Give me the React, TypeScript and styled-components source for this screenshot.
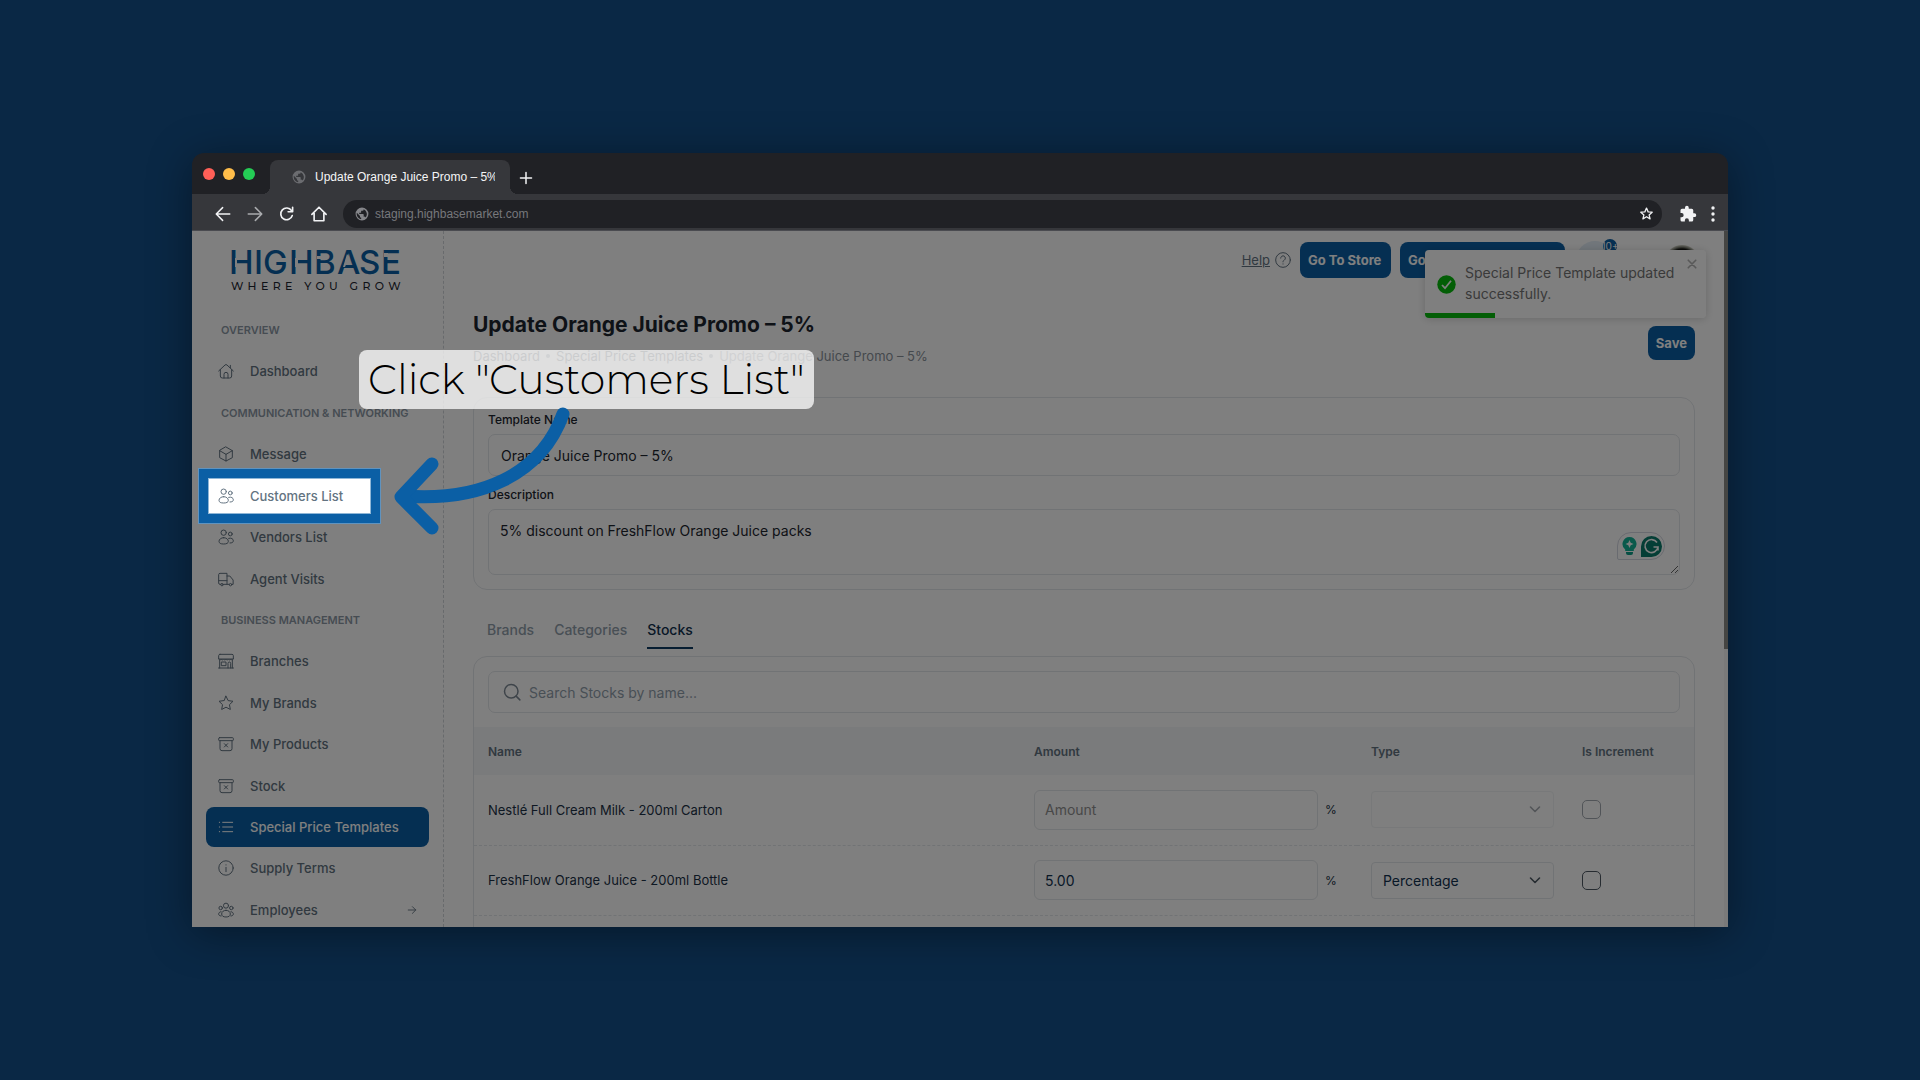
import React from 'react';
import styled, { createGlobalStyle, css } from 'styled-components';

const blue = '#0b5fa5';
const line = '#e3e6ea';
const appFont = 'Inter, "Open Sans", sans-serif';

const GlobalStyle = createGlobalStyle`
  *, *::before, *::after { box-sizing: border-box; }
  body { margin: 0; background: #0a2845; font-family: ${appFont}; }
  button, input, textarea, select { font-family: inherit; margin: 0; }
`;

/* ---------- stage and browser chrome ---------- */

const Stage = styled.div`
  min-height: 100vh;
  display: flex;
  align-items: center;
  justify-content: center;
`;

const BrowserWindow = styled.div`
  width: 80%;
  border-radius: 12px 12px 0 0;
  overflow: hidden;
  box-shadow: 0 6px 44px rgba(0, 0, 0, 0.4);
`;

const TitleBar = styled.div`
  height: 41px;
  background: #202125;
  display: flex;
  align-items: flex-end;
`;

const Lights = styled.div`
  align-self: center;
  display: flex;
  gap: 8px;
  padding: 0 15px 0 11px;
`;

const Light = styled.span<{ $color: string }>`
  width: 12px;
  height: 12px;
  border-radius: 50%;
  background: ${(p) => p.$color};
`;

const BrowserTab = styled.div`
  position: relative;
  width: 240px;
  height: 34px;
  padding: 0 15px 0 22px;
  border-radius: 8px 8px 0 0;
  background: #36373b;
  display: flex;
  align-items: center;
  gap: 9px;
  font: 12px "Liberation Sans", Arial, sans-serif;
  color: #f4f5f6;

  &::before,
  &::after {
    content: '';
    position: absolute;
    bottom: 0;
    width: 8px;
    height: 8px;
  }
  &::before {
    left: -8px;
    background: radial-gradient(circle at 0 0, transparent 8px, #36373b 8px);
  }
  &::after {
    right: -8px;
    background: radial-gradient(circle at 100% 0, transparent 8px, #36373b 8px);
  }
`;

const TabTitle = styled.span`
  flex: 1;
  line-height: 18px;
  white-space: nowrap;
  overflow: hidden;
`;

const ChromeButton = styled.button`
  border: 0;
  padding: 0;
  background: none;
  display: flex;
  align-items: center;
  color: #f1f2f4;
`;

const NewTab = styled(ChromeButton)`
  height: 32px;
  margin-left: 9px;
`;

const Toolbar = styled.div`
  height: 37px;
  padding: 3px 8px 0 22px;
  background: #36373b;
  border-bottom: 1px solid #4a4b50;
  display: flex;
  align-items: center;
`;

const NavButtons = styled.div`
  display: flex;
  gap: 14px;
  padding-right: 15px;
`;

const AddressBar = styled.div`
  flex: 1;
  height: 28px;
  padding: 0 9px 0 12px;
  border-radius: 14px;
  background: #202125;
  display: flex;
  align-items: center;
  gap: 6px;
`;

const AddressInput = styled.input`
  flex: 1;
  border: 0;
  padding: 0;
  background: none;
  font: 12px "Liberation Sans", Arial, sans-serif;
  color: #77787c;
  outline: none;
`;

const ToolbarEnd = styled.div`
  display: flex;
  gap: 9px;
  padding-left: 17px;
`;

/* ---------- page viewport ---------- */

const Viewport = styled.div`
  position: relative;
  height: 696px;
  overflow: hidden;
  background: #fff;
  display: flex;
  align-items: flex-start;
`;

const Sidebar = styled.aside`
  width: 252px;
  flex: none;
  height: 100%;
  border-right: 1px dashed #d0d4d9;
`;

const Brand = styled.div`
  height: 79px;
  padding: 18px 0 0 32px;
`;

const Menu = styled.nav`
  height: 620px;
  padding: 0 14px;
  display: flex;
  flex-direction: column;
  justify-content: space-between;
`;

const SectionTitle = styled.div`
  height: 40px;
  line-height: 40px;
  padding-left: 15px;
  font-size: 11px;
  font-weight: 600;
  color: #8c98a5;
  white-space: nowrap;
`;

const MenuRow = styled.div`
  position: relative;
`;

const MenuLink = styled.a<{ $active?: boolean }>`
  height: 40px;
  padding: 0 12px;
  border-radius: 8px;
  display: flex;
  align-items: center;
  gap: 16px;
  font-size: 13px;
  font-weight: 500;
  white-space: nowrap;
  text-decoration: none;
  color: #637381;
  ${(p) => p.$active && css`
    background: ${blue};
    color: #fff;
  `}
`;

const MenuText = styled.span`
  flex: 1;
`;

const Spotlight = styled.div`
  position: absolute;
  z-index: 5;
  left: -8px;
  top: -8px;
  width: 183px;
  height: 56px;
  border: 10px solid ${blue};
  outline: 1px solid #5f93bf;
  outline-offset: -1px;
  box-shadow: inset 0 0 0 1px #8fb6d6, 0 0 0 3000px rgba(0, 0, 0, 0.5);
  pointer-events: none;
`;

const Main = styled.main`
  flex: 1;
  min-width: 0;
  padding: 0 29px;
`;

const ScrollTrack = styled.div`
  width: 4px;
  height: 100%;
  flex: none;
  background: #f4f4f4;
`;

const ScrollThumb = styled.div`
  height: 60%;
  background: #8a8a86;
`;

/* ---------- header ---------- */

const TopBar = styled.header`
  height: 47px;
  padding-top: 11px;
  display: flex;
  justify-content: flex-end;
  align-items: center;
  gap: 9px;
`;

const HelpLink = styled.a`
  display: flex;
  align-items: center;
  gap: 5px;
  font-size: 13px;
  color: #637381;
`;

const Button = styled.button<{ $width?: number }>`
  height: 36px;
  padding: 0 8px;
  border: 0;
  border-radius: 8px;
  background: ${blue};
  color: #fff;
  font-size: 13px;
  font-weight: 700;
  text-align: left;
  white-space: nowrap;
  ${(p) => p.$width && css`width: ${p.$width}px;`}
`;

const SaveButton = styled(Button)`
  height: 34px;
  margin-top: 17px;
`;

const Bell = styled.button`
  position: relative;
  width: 38px;
  height: 38px;
  margin-left: 2px;
  padding: 0;
  border: 0;
  border-radius: 50%;
  background: #e3edf6;
`;

const BellCount = styled.span`
  position: absolute;
  top: -2px;
  right: -3px;
  width: 14px;
  height: 14px;
  border-radius: 7px;
  overflow: hidden;
  background: ${blue};
  color: #fff;
  display: flex;
  justify-content: center;
  font-size: 10px;
  line-height: 14px;
`;

const Avatar = styled.div`
  width: 36px;
  height: 36px;
  margin: 6px -5px 0 41px;
  border-radius: 50%;
  background: radial-gradient(circle, #12130f 0 14px, #84867a 16px, #d5d6cb 18px);
`;

const PageHead = styled.div`
  padding-top: 31px;
  display: flex;
  justify-content: space-between;
  align-items: flex-start;
`;

const Title = styled.h1`
  margin: 0;
  font-size: 21px;
  line-height: 32px;
  font-weight: 700;
  color: #1c252e;
`;

const Crumbs = styled.ol`
  list-style: none;
  margin: 6px 0 0;
  padding: 0;
  display: flex;
  gap: 6px;
  font-size: 13px;
  line-height: 18px;
`;

const Crumb = styled.li`
  display: flex;
  align-items: center;
  gap: 6px;
  color: #8a929b;

  & + &::before {
    content: '';
    width: 4px;
    height: 4px;
    border-radius: 50%;
    background: #919eab;
  }
`;

const CrumbLink = styled.a`
  color: #5f6a75;
  text-decoration: none;
`;

/* ---------- form ---------- */

const Card = styled.section<{ $gap: number }>`
  margin-top: ${(p) => p.$gap}px;
  border: 1px solid ${line};
  border-radius: 14px;
`;

const FormBody = styled.div`
  padding: 13px 14px 14px;
  display: flex;
  flex-direction: column;
  gap: 10px;
`;

const Field = styled.div`
  position: relative;
  display: flex;
  flex-direction: column;
  gap: 5px;
`;

const Label = styled.label`
  font-size: 12px;
  line-height: 18px;
  font-weight: 500;
  color: #1c252e;
`;

const box = css`
  border: 1px solid ${line};
  border-radius: 7px;
  background: #fff;
  font-size: 14px;
  color: #1c252e;
  outline: none;
`;

const TextInput = styled.input`
  ${box}
  height: 42px;
  padding: 0 12px;
`;

const TextArea = styled.textarea`
  ${box}
  display: block;
  height: 66px;
  padding: 11px;
  line-height: 20px;
`;

const Assistant = styled.div`
  position: absolute;
  right: 15px;
  bottom: 15px;
  width: 48px;
  height: 28px;
  padding: 0 2px 0 4px;
  border: 1px solid #d3d6e0;
  border-radius: 14px 14px 14px 2px;
  background: #fff;
  display: flex;
  align-items: center;
  justify-content: space-between;
`;

const Tabs = styled.div`
  margin-top: 30px;
  padding-left: 14px;
  display: flex;
  gap: 20px;
`;

const Tab = styled.button<{ $active?: boolean }>`
  padding: 0 0 7px;
  border: 0;
  border-bottom: 2px solid ${(p) => (p.$active ? '#0c3a63' : 'transparent')};
  background: none;
  font-size: 14px;
  line-height: 20px;
  font-weight: 500;
  color: ${(p) => (p.$active ? '#10304e' : '#919eab')};
`;

const SearchBox = styled.label`
  ${box}
  height: 42px;
  margin: 14px;
  padding: 0 14px;
  display: flex;
  align-items: center;
  gap: 8px;
  color: #7d8994;
`;

const SearchInput = styled.input`
  flex: 1;
  border: 0;
  padding: 0;
  outline: none;
  background: none;
  font-size: 14px;
  &::placeholder { color: #919eab; }
`;

const Table = styled.table`
  width: 100%;
  table-layout: fixed;
  border-collapse: collapse;
`;

const Col = styled.col<{ $width?: number }>`
  ${(p) => p.$width && css`width: ${p.$width}px;`}
`;

const HeadCell = styled.th`
  height: 48px;
  padding: 0 14px;
  background: #f4f6f8;
  text-align: left;
  font-size: 12px;
  font-weight: 600;
  color: #637381;
`;

const Cell = styled.td`
  height: 70px;
  padding: 0 14px;
  border-bottom: 1px dashed ${line};
  font-size: 13px;
  color: #1c3146;
`;

const AmountGroup = styled.div`
  display: flex;
  align-items: center;
  gap: 7px;
  font-size: 12px;
`;

const AmountInput = styled.input`
  ${box}
  width: 284px;
  height: 40px;
  padding: 0 10px;
  border-radius: 6px;
  color: #10304e;
  &::placeholder { color: #919191; }
`;

const SelectWrap = styled.div<{ $off?: boolean }>`
  position: relative;
  opacity: ${(p) => (p.$off ? 0.5 : 1)};
`;

const Select = styled.select`
  ${box}
  display: block;
  width: 100%;
  height: 37px;
  padding: 0 11px;
  border-radius: 4px;
  appearance: none;
  color: #10304e;
  opacity: 1;
`;

const Chevron = styled.svg`
  position: absolute;
  right: 13px;
  top: 12px;
  pointer-events: none;
`;

const Check = styled.input<{ $off?: boolean }>`
  appearance: none;
  display: block;
  width: 19px;
  height: 19px;
  border: 1px solid ${(p) => (p.$off ? '#a3a9b0' : '#4e5963')};
  border-radius: 5px;
`;

/* ---------- layers over the page ---------- */

const Toast = styled.div`
  position: absolute;
  z-index: 2;
  top: 19px;
  right: 22px;
  width: 281px;
  height: 68px;
  padding: 12px;
  border-radius: 4px;
  overflow: hidden;
  background: #fff;
  display: flex;
  gap: 9px;
  font-size: 14px;
  line-height: 21px;
  color: #757575;
`;

const ToastShadow = styled.div`
  position: absolute;
  z-index: 1;
  top: 19px;
  right: 22px;
  width: 281px;
  height: 68px;
  border-radius: 4px;
  box-shadow: 0 1px 9px rgba(0, 0, 0, 0.18);
`;

const ToastIcon = styled.svg`
  flex: none;
  align-self: center;
`;

const ToastText = styled.span`
  width: 216px;
  flex: none;
`;

const ToastClose = styled.button`
  position: absolute;
  top: 9px;
  right: 9px;
  width: 10px;
  height: 10px;
  border: 0;
  padding: 0;
  background: none;
  display: flex;
  color: #b3b3b3;
`;

const ToastProgress = styled.div`
  position: absolute;
  left: 0;
  bottom: 0;
  width: 25%;
  height: 5px;
  background: #07bc0c;
`;

const Callout = styled.div`
  position: absolute;
  z-index: 6;
  left: 167px;
  top: 119px;
  height: 59px;
  padding: 0 9px;
  border-radius: 8px;
  background: rgba(255, 255, 255, 0.75);
  font-family: Montserrat, Inter, sans-serif;
  font-size: 41px;
  line-height: 59px;
  font-weight: 300;
  color: #000;
  white-space: nowrap;
`;

const Arrow = styled.svg`
  position: absolute;
  z-index: 7;
  left: 200px;
  top: 169px;
`;

/* ---------- drawings ---------- */

const Globe = ({ size, color }: { size: number; color: string }) => (
  <svg width={size} height={size} viewBox="0 0 24 24" fill={color} aria-hidden="true">
    <path d="M12 1a11 11 0 1 0 0 22 11 11 0 0 0 0-22zm-1.500 19.800A9 9 0 0 1 3.200 10l5.300 5.300v1.100a2.200 2.200 0 0 0 2.200 2.200zm7.600-2.800a2.200 2.200 0 0 0-2.100-1.500h-1.100v-3.300a1.100 1.100 0 0 0-1.100-1.100H7.200V9.900h2.200a1.100 1.100 0 0 0 1.100-1.100V6.600h2.200a2.200 2.200 0 0 0 2.200-2.200v-.5A9 9 0 0 1 18.100 18z" />
  </svg>
);

const Line = ({ children, size = 16, width = 1.5 }: { children: React.ReactNode; size?: number; width?: number }) => (
  <svg width={size} height={size} viewBox="0 0 24 24" fill="none" stroke="currentColor" strokeWidth={width} strokeLinecap="round" strokeLinejoin="round" aria-hidden="true">
    {children}
  </svg>
);

const UsersPair = (
  <>
    <circle cx="8.500" cy="5.500" r="4" />
    <circle cx="18.500" cy="7.500" r="2.800" />
    <path d="M8.500 13c-4 0-7 2.500-7 5.500 0 2.800 2.500 4 7 4s7-1.200 7-4c0-3-3-5.500-7-5.500z" />
    <path d="M16 14c4-1.200 7 .8 7 3.700 0 2.400-2 3.300-5 3.300" />
  </>
);

const ArchiveX = (
  <>
    <rect x="1" y="2.500" width="22" height="4.500" rx="1.200" />
    <path d="M3 7v12a3 3 0 0 0 3 3h12a3 3 0 0 0 3-3V7M9.500 11.500l5 5M14.500 11.500l-5 5" />
  </>
);

const icons: Record<string, React.ReactNode> = {
  home: (
    <>
      <path d="M1 12 10.500 3a2.200 2.200 0 0 1 3 0L23 12M3.500 10v9.500a3 3 0 0 0 3 3h11a3 3 0 0 0 3-3V10M18.500 7V3.500" />
      <path d="M9 22.500V17a3 3 0 0 1 6 0v5.500" />
    </>
  ),
  cube: <path d="M12 1.500 21.500 7v10.500L12 22.500 2.500 17.500V7zM2.500 7 12 12.500 21.500 7M12 12.500v10" />,
  users: UsersPair,
  truck: (
    <>
      <path d="M4 20H3a2 2 0 0 1-2-2V5.500a2 2 0 0 1 2-2h10.500V20M1 14.500h12.500M13.500 7.500h4.200l5 6V20h-1.500M8.500 20h8" />
      <circle cx="6" cy="20.500" r="1.800" />
      <circle cx="18.800" cy="20.500" r="1.800" />
    </>
  ),
  store: (
    <>
      <path d="M3 2h18a2 2 0 0 1 2 2v5H1V4a2 2 0 0 1 2-2zM1 9c.8 1.800 3 1.800 3.700 0 .7 1.800 2.900 1.800 3.600 0 .8 1.800 3 1.800 3.700 0 .7 1.800 2.900 1.800 3.600 0 .8 1.800 3 1.800 3.700 0 .7 1.800 2.900 1.800 3.700 0M2.500 11v11.500M21.500 11v11.500M.8 22.500h22.400" />
      <path d="M5.500 13.500H12v5.500H5.500zM15 22.500v-7a2 2 0 0 1 4 0v7" />
    </>
  ),
  star: <path d="m12 1.800 3.200 6.600 7.300 1-5.300 5.100 1.300 7.200L12 18.300l-6.500 3.400 1.300-7.200L1.500 9.400l7.300-1z" />,
  archive: ArchiveX,
  list: <path d="M7 5h15M7 12h15M7 19h15M2 5h.5M2 12h.5M2 19h.5" />,
  info: (
    <>
      <circle cx="12" cy="12" r="10.800" />
      <path d="M12 11v6.500M12 7.200v.3" />
    </>
  ),
  team: (
    <>
      <circle cx="12" cy="5.500" r="3.800" />
      <circle cx="4" cy="9" r="2.600" />
      <circle cx="20" cy="9" r="2.600" />
      <path d="M12 12.500c-3.800 0-6.500 2.200-6.500 5.500 0 3 2.500 4.500 6.500 4.500s6.500-1.500 6.500-4.500c0-3.300-2.700-5.500-6.500-5.500zM4.500 14.500C2 15 1 16.500 1 18c0 1.800 1.300 2.800 3.500 3M19.500 14.500C22 15 23 16.500 23 18c0 1.800-1.300 2.800-3.500 3" />
    </>
  ),
};

const Logo = () => (
  <svg width="190" height="48" viewBox="-7 0 190 48" role="img" aria-label="Highbase, where you grow">
    <text x="-2 23 32 58 83 106 128 150" y="25" fontFamily="Inter, sans-serif" fontSize="33" fontWeight="500" fill={blue}>
      HIGHBASE
    </text>
    <g fill="#fff">
      <rect x="4" y="9" width="2" height="9" />
      <rect x="64" y="9" width="3" height="9" />
      <rect x="86" y="7" width="4" height="3" />
      <rect x="153" y="4" width="4" height="4" />
      <path d="M116 5l-4 13 2 0 4-10z" />
    </g>
    <text x="0" y="41" fontFamily="Montserrat, sans-serif" fontSize="11" fontWeight="500" letterSpacing="0.4em" fill="#1c252e">
      WHERE YOU GROW
    </text>
  </svg>
);

/* ---------- data ---------- */

type Entry = { title: string } | { icon: string; label: string; active?: boolean; spot?: boolean; more?: boolean };

const menu: Entry[] = [
  { title: 'OVERVIEW' },
  { icon: 'home', label: 'Dashboard' },
  { title: 'COMMUNICATION & NETWORKING' },
  { icon: 'cube', label: 'Message' },
  { icon: 'users', label: 'Customers List', spot: true },
  { icon: 'users', label: 'Vendors List' },
  { icon: 'truck', label: 'Agent Visits' },
  { title: 'BUSINESS MANAGEMENT' },
  { icon: 'store', label: 'Branches' },
  { icon: 'star', label: 'My Brands' },
  { icon: 'archive', label: 'My Products' },
  { icon: 'archive', label: 'Stock' },
  { icon: 'list', label: 'Special Price Templates', active: true },
  { icon: 'info', label: 'Supply Terms' },
  { icon: 'team', label: 'Employees', more: true },
];

const stocks = [
  { name: 'Nestlé Full Cream Milk - 200ml Carton', amount: '', type: '' },
  { name: 'FreshFlow Orange Juice - 200ml Bottle', amount: '5.00', type: 'Percentage' },
];

/* ---------- page ---------- */

const Chrome = () => (
  <>
    <TitleBar>
      <Lights>
        <Light $color="#ff5f57" />
        <Light $color="#ffbd4a" />
        <Light $color="#24cc55" />
      </Lights>
      <BrowserTab>
        <Globe size={14} color="#6b6c70" />
        <TabTitle>Update Orange Juice Promo – 5%</TabTitle>
      </BrowserTab>
      <NewTab aria-label="New tab">
        <Line size={14} width={2.6}><path d="M12 2.500v19M2.500 12h19" /></Line>
      </NewTab>
    </TitleBar>
    <Toolbar>
      <NavButtons>
        <ChromeButton aria-label="Back">
          <Line size={18} width={2}><path d="M21 12H4M11.500 3.500 3 12l8.500 8.500" /></Line>
        </ChromeButton>
        <ChromeButton aria-label="Forward">
          <svg width="18" height="18" viewBox="0 0 24 24" fill="none" stroke="#a9aaad" strokeWidth="2" strokeLinecap="round" strokeLinejoin="round" aria-hidden="true">
            <path d="M3 12h17M12.500 3.500 21 12l-8.500 8.500" />
          </svg>
        </ChromeButton>
        <ChromeButton aria-label="Reload">
          <Line size={18} width={2.2}><path d="M18 7.500A7.800 7.800 0 1 0 19 14M19.500 3v6H13.500" /></Line>
        </ChromeButton>
        <ChromeButton aria-label="Home">
          <Line size={18} width={2.2}><path d="M2.500 12.500 12 3l9.500 9.500M5.500 10.500V21h13V10.500" /></Line>
        </ChromeButton>
      </NavButtons>
      <AddressBar>
        <Globe size={14} color="#85868a" />
        <AddressInput aria-label="Address" defaultValue="staging.highbasemarket.com" />
        <ChromeButton aria-label="Bookmark">
          <Line size={13} width={2.4}><path d="m12 2 3 7 7.500.6-5.700 5 1.800 7.400-6.600-4-6.600 4 1.800-7.400-5.700-5L9 9z" /></Line>
        </ChromeButton>
      </AddressBar>
      <ToolbarEnd>
        <ChromeButton aria-label="Extensions">
          <svg width="18" height="18" viewBox="0 0 24 24" fill="currentColor" aria-hidden="true">
            <path d="M20.500 11H19V7a2 2 0 0 0-2-2h-4V3.500a2.500 2.500 0 0 0-5 0V5H4a2 2 0 0 0-2 2v3.800h1.500a2.700 2.700 0 0 1 0 5.400H2V20a2 2 0 0 0 2 2h3.800v-1.500a2.700 2.700 0 0 1 5.400 0V22H17a2 2 0 0 0 2-2v-4h1.500a2.500 2.500 0 0 0 0-5z" />
          </svg>
        </ChromeButton>
        <ChromeButton aria-label="Browser menu">
          <svg width="14" height="18" viewBox="0 0 14 18" fill="currentColor" aria-hidden="true">
            <circle cx="7" cy="3" r="1.700" />
            <circle cx="7" cy="9" r="1.700" />
            <circle cx="7" cy="15" r="1.700" />
          </svg>
        </ChromeButton>
      </ToolbarEnd>
    </Toolbar>
  </>
);

const SideMenu = () => (
  <Sidebar>
    <Brand><Logo /></Brand>
    <Menu>
      {menu.map((item) =>
        'title' in item ? (
          <SectionTitle key={item.title}>{item.title}</SectionTitle>
        ) : (
          <MenuRow key={item.label}>
            <MenuLink href="#" $active={item.active}>
              <Line>{icons[item.icon]}</Line>
              <MenuText>{item.label}</MenuText>
              {item.more && <Line size={10} width={2.2}><path d="M3 12h18M13 4l8 8-8 8" /></Line>}
            </MenuLink>
            {item.spot && <Spotlight />}
          </MenuRow>
        ),
      )}
    </Menu>
  </Sidebar>
);

const StocksTable = () => (
  <Table>
    <colgroup>
      <Col />
      <Col $width={337} />
      <Col $width={211} />
      <Col $width={126} />
    </colgroup>
    <thead>
      <tr>
        <HeadCell>Name</HeadCell>
        <HeadCell>Amount</HeadCell>
        <HeadCell>Type</HeadCell>
        <HeadCell>Is Increment</HeadCell>
      </tr>
    </thead>
    <tbody>
      {stocks.map((row) => (
        <tr key={row.name}>
          <Cell>{row.name}</Cell>
          <Cell>
            <AmountGroup>
              <AmountInput aria-label={'Amount for ' + row.name} placeholder="Amount" defaultValue={row.amount} />
              %
            </AmountGroup>
          </Cell>
          <Cell>
            <SelectWrap $off={!row.type}>
              <Select aria-label={'Type for ' + row.name} disabled={!row.type} defaultValue={row.type}>
                <option>{row.type}</option>
              </Select>
              <Chevron width="12" height="12" viewBox="0 0 12 12" fill="none" stroke="#4e5963" strokeWidth="1.600" strokeLinecap="round" strokeLinejoin="round">
                <path d="M1.500 4 6 8.500 10.500 4" />
              </Chevron>
            </SelectWrap>
          </Cell>
          <Cell>
            <Check type="checkbox" aria-label={'Is increment for ' + row.name} $off={!row.type} disabled={!row.type} />
          </Cell>
        </tr>
      ))}
      <tr>
        <Cell colSpan={4} />
      </tr>
    </tbody>
  </Table>
);

export default function App() {
  return (
    <Stage>
      <GlobalStyle />
      <BrowserWindow>
        <Chrome />
        <Viewport>
          <SideMenu />
          <Main>
            <TopBar>
              <HelpLink href="#">
                Help
                <Line><circle cx="12" cy="12" r="11" /><path d="M8.500 9.200a3.500 3.500 0 1 1 5.300 3c-1.200.8-1.800 1.300-1.800 2.600M12 17.800v.3" /></Line>
              </HelpLink>
              <Button $width={91}>Go To Store</Button>
              <Button $width={165}>Go</Button>
              <Bell aria-label="Notifications">
                <BellCount>10+</BellCount>
              </Bell>
              <Avatar />
            </TopBar>
            <PageHead>
              <div>
                <Title>Update Orange Juice Promo – 5%</Title>
                <Crumbs>
                  <Crumb><CrumbLink href="#">Dashboard</CrumbLink></Crumb>
                  <Crumb><CrumbLink href="#">Special Price Templates</CrumbLink></Crumb>
                  <Crumb>Update Orange Juice Promo – 5%</Crumb>
                </Crumbs>
              </div>
              <SaveButton>Save</SaveButton>
            </PageHead>
            <Card $gap={32}>
              <FormBody>
                <Field>
                  <Label htmlFor="template-name">Template Name</Label>
                  <TextInput id="template-name" defaultValue="Orange Juice Promo – 5%" />
                </Field>
                <Field>
                  <Label htmlFor="description">Description</Label>
                  <TextArea id="description" defaultValue="5% discount on FreshFlow Orange Juice packs" />
                  <Assistant>
                    <svg width="15" height="18" viewBox="0 0 15 18" aria-hidden="true">
                      <path d="M7.500 0a7 7 0 0 0-4.300 12.500V14h8.600v-1.500A7 7 0 0 0 7.500 0z" fill="#12b397" />
                      <path d="M4 15h7v1a2 2 0 0 1-2 2H6a2 2 0 0 1-2-2z" fill="#0f9f88" />
                      <path d="M7.500 3 8.700 5.800 11.500 7 8.700 8.200 7.500 11 6.300 8.200 3.500 7l2.800-1.200z" fill="#fff" />
                    </svg>
                    <svg width="21" height="21" viewBox="0 0 21 21" aria-hidden="true">
                      <path d="M10.500 0A10.500 10.500 0 0 0 0 10.500V21h10.500a10.500 10.500 0 0 0 0-21z" fill="#0a7d6c" />
                      <path d="M16 6.500a6.500 6.500 0 1 0 1 4.500h-4.500M17 11v3.500" fill="none" stroke="#fff" strokeWidth="1.600" />
                    </svg>
                  </Assistant>
                </Field>
              </FormBody>
            </Card>
            <Tabs role="tablist">
              <Tab role="tab">Brands</Tab>
              <Tab role="tab">Categories</Tab>
              <Tab role="tab" $active aria-selected="true">Stocks</Tab>
            </Tabs>
            <Card $gap={7}>
              <SearchBox>
                <Line size={18} width={2}><circle cx="11" cy="11" r="9" /><path d="m17.500 17.500 5 5" /></Line>
                <SearchInput type="search" aria-label="Search stocks" placeholder="Search Stocks by name..." />
              </SearchBox>
              <StocksTable />
            </Card>
          </Main>
          <ScrollTrack><ScrollThumb /></ScrollTrack>
          <ToastShadow />
          <Toast role="status">
            <ToastIcon width="19" height="19" viewBox="0 0 19 19">
              <circle cx="9.500" cy="9.500" r="9.200" fill="#07bc0c" />
              <path d="m5 10 3 3.200 6-7.400" fill="none" stroke="#fff" strokeWidth="1.800" />
            </ToastIcon>
            <ToastText>Special Price Template updated successfully.</ToastText>
            <ToastClose aria-label="Close">
              <Line size={10} width={4}><path d="m3 3 18 18M21 3 3 21" /></Line>
            </ToastClose>
            <ToastProgress />
          </Toast>
          <Callout>Click "Customers List"</Callout>
          <Arrow width="184" height="140" viewBox="0 0 184 140" fill="none" stroke={blue} strokeWidth="13" strokeLinecap="round" strokeLinejoin="round">
            <path d="M171 14C149 75 88 102 11 96" />
            <path d="M40 64 9 97l31 31" />
          </Arrow>
        </Viewport>
      </BrowserWindow>
    </Stage>
  );
}
